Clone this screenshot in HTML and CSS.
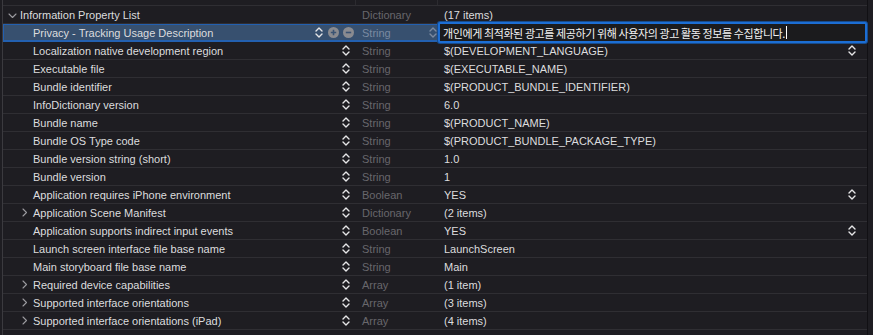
FILE: index.html
```html
<!DOCTYPE html>
<html>
<head>
<meta charset="utf-8">
<link rel="stylesheet" href="styles.css">
</head>
<body>
<svg width="0" height="0" class="defs">
  <defs>
    <symbol id="stepper" viewBox="0 0 8 11">
      <path d="M1 4 L4 1 L7 4 M1 7 L4 10 L7 7" fill="none" stroke="currentColor" stroke-width="1.4" stroke-linecap="round" stroke-linejoin="round"/>
    </symbol>
    <symbol id="chev-right" viewBox="0 0 6 9">
      <path d="M1 1 L4.5 4.5 L1 8" fill="none" stroke="currentColor" stroke-width="1.1" stroke-linecap="round" stroke-linejoin="round"/>
    </symbol>
    <symbol id="chev-down" viewBox="0 0 9 6">
      <path d="M1 1 L4.5 4.5 L8 1" fill="none" stroke="currentColor" stroke-width="1.1" stroke-linecap="round" stroke-linejoin="round"/>
    </symbol>
  </defs>
</svg>
<div class="table">
  <div class="strip">
    <span class="c-key"></span><span class="c-ctrl"></span><span class="c-type"></span><span class="c-val"></span>
  </div>

  <div class="row">
    <div class="key root"><svg class="disc down"><use href="#chev-down"/></svg>Information Property List</div>
    <div class="ctrl"></div>
    <div class="type">Dictionary</div>
    <div class="val">(17 items)</div>
  </div>

  <div class="row sel">
    <div class="key">Privacy - Tracking Usage Description</div>
    <div class="ctrl selctrl">
      <svg class="step"><use href="#stepper"/></svg>
      <svg class="pm" viewBox="0 0 11 11"><circle cx="5.5" cy="5.5" r="5.5" fill="#8a8b90"/><path d="M2.8 5.5 H8.2 M5.5 2.8 V8.2" stroke="#3a5373" stroke-width="1.6"/></svg>
      <svg class="pm" viewBox="0 0 11 11"><circle cx="5.5" cy="5.5" r="5.5" fill="#8a8b90"/><path d="M2.8 5.5 H8.2" stroke="#3a5373" stroke-width="1.6"/></svg>
    </div>
    <div class="type">String<svg class="step faint"><use href="#stepper"/></svg></div>
    <div class="val"><div class="field"><span class="ko">개인에게 최적화된 광고를 제공하기 위해 사용자의 광고 활동 정보를 수집합니다.</span><span class="caret"></span></div></div>
  </div>

  <div class="row">
    <div class="key">Localization native development region</div>
    <div class="ctrl"><svg class="step"><use href="#stepper"/></svg></div>
    <div class="type">String</div>
    <div class="val">$(DEVELOPMENT_LANGUAGE)<svg class="step vstep"><use href="#stepper"/></svg></div>
  </div>

  <div class="row">
    <div class="key">Executable file</div>
    <div class="ctrl"><svg class="step"><use href="#stepper"/></svg></div>
    <div class="type">String</div>
    <div class="val">$(EXECUTABLE_NAME)</div>
  </div>

  <div class="row">
    <div class="key">Bundle identifier</div>
    <div class="ctrl"><svg class="step"><use href="#stepper"/></svg></div>
    <div class="type">String</div>
    <div class="val">$(PRODUCT_BUNDLE_IDENTIFIER)</div>
  </div>

  <div class="row">
    <div class="key">InfoDictionary version</div>
    <div class="ctrl"><svg class="step"><use href="#stepper"/></svg></div>
    <div class="type">String</div>
    <div class="val">6.0</div>
  </div>

  <div class="row">
    <div class="key">Bundle name</div>
    <div class="ctrl"><svg class="step"><use href="#stepper"/></svg></div>
    <div class="type">String</div>
    <div class="val">$(PRODUCT_NAME)</div>
  </div>

  <div class="row">
    <div class="key">Bundle OS Type code</div>
    <div class="ctrl"><svg class="step"><use href="#stepper"/></svg></div>
    <div class="type">String</div>
    <div class="val">$(PRODUCT_BUNDLE_PACKAGE_TYPE)</div>
  </div>

  <div class="row">
    <div class="key">Bundle version string (short)</div>
    <div class="ctrl"><svg class="step"><use href="#stepper"/></svg></div>
    <div class="type">String</div>
    <div class="val">1.0</div>
  </div>

  <div class="row">
    <div class="key">Bundle version</div>
    <div class="ctrl"><svg class="step"><use href="#stepper"/></svg></div>
    <div class="type">String</div>
    <div class="val">1</div>
  </div>

  <div class="row">
    <div class="key">Application requires iPhone environment</div>
    <div class="ctrl"><svg class="step"><use href="#stepper"/></svg></div>
    <div class="type">Boolean</div>
    <div class="val">YES<svg class="step vstep"><use href="#stepper"/></svg></div>
  </div>

  <div class="row">
    <div class="key"><svg class="disc"><use href="#chev-right"/></svg>Application Scene Manifest</div>
    <div class="ctrl"><svg class="step"><use href="#stepper"/></svg></div>
    <div class="type">Dictionary</div>
    <div class="val">(2 items)</div>
  </div>

  <div class="row">
    <div class="key">Application supports indirect input events</div>
    <div class="ctrl"><svg class="step"><use href="#stepper"/></svg></div>
    <div class="type">Boolean</div>
    <div class="val">YES<svg class="step vstep"><use href="#stepper"/></svg></div>
  </div>

  <div class="row">
    <div class="key">Launch screen interface file base name</div>
    <div class="ctrl"><svg class="step"><use href="#stepper"/></svg></div>
    <div class="type">String</div>
    <div class="val">LaunchScreen</div>
  </div>

  <div class="row">
    <div class="key">Main storyboard file base name</div>
    <div class="ctrl"><svg class="step"><use href="#stepper"/></svg></div>
    <div class="type">String</div>
    <div class="val">Main</div>
  </div>

  <div class="row">
    <div class="key"><svg class="disc"><use href="#chev-right"/></svg>Required device capabilities</div>
    <div class="ctrl"><svg class="step"><use href="#stepper"/></svg></div>
    <div class="type">Array</div>
    <div class="val">(1 item)</div>
  </div>

  <div class="row">
    <div class="key"><svg class="disc"><use href="#chev-right"/></svg>Supported interface orientations</div>
    <div class="ctrl"><svg class="step"><use href="#stepper"/></svg></div>
    <div class="type">Array</div>
    <div class="val">(3 items)</div>
  </div>

  <div class="row">
    <div class="key"><svg class="disc"><use href="#chev-right"/></svg>Supported interface orientations (iPad)</div>
    <div class="ctrl"><svg class="step"><use href="#stepper"/></svg></div>
    <div class="type">Array</div>
    <div class="val">(4 items)</div>
  </div>
</div>
</body>
</html>
```

FILE: styles.css
```css
html, body {
  margin: 0;
  padding: 0;
  background: #1e1d22;
  height: 100%;
  overflow: hidden;
}

.defs {
  position: absolute;
}

.table {
  width: 866px;
  height: 335px;
  margin-left: 2px;
  border-left: 1px solid #3b3a3f;
  border-right: 1px solid #111014;
  box-sizing: border-box;
  font-family: "Liberation Sans", Arial, sans-serif;
  font-size: 11px;
  color: #dcdcde;
}

.strip {
  height: 5px;
  border-bottom: 1px solid #2f2e33;
  display: grid;
  grid-template-columns: 353px 0px 82px 1fr;
}

.strip .c-key {
  border-right: 1px solid #2c2b30;
}

.strip .c-type {
  border-right: 1px solid #2c2b30;
}

.row {
  height: 17px;
  border-bottom: 1px solid #2f2e33;
  display: grid;
  grid-template-columns: 305px 48px 82px 1fr;
  align-items: center;
  white-space: nowrap;
}

.key {
  padding-left: 30px;
  display: flex;
  align-items: center;
  position: relative;
}

.key.root {
  padding-left: 17px;
}

.disc {
  width: 6px;
  height: 9px;
  color: #9c9ba0;
  position: absolute;
  left: 19px;
  top: 50%;
  margin-top: -4.5px;
}

.disc.down {
  width: 9px;
  height: 6px;
  left: 5px;
  margin-top: -2px;
}

.ctrl {
  display: flex;
  justify-content: flex-end;
  align-items: center;
  padding-right: 6px;
  height: 17px;
}

.step {
  width: 8px;
  height: 11px;
  color: #e6e6e8;
  flex: none;
}

.step.faint {
  color: #7b8aa0;
  margin-left: auto;
  margin-right: 1px;
}

.selctrl {
  padding-right: 2px;
  gap: 4px;
}

.selctrl .step {
  margin-right: 1px;
}

.pm {
  width: 11px;
  height: 11px;
  flex: none;
}

.type {
  padding-left: 6px;
  color: #68676c;
  display: flex;
  align-items: center;
}

.val {
  padding-left: 6px;
  display: flex;
  align-items: center;
  padding-right: 11px;
}

.vstep {
  margin-left: auto;
}

.row.sel {
  background: #37506f;
  box-shadow: inset 0 0 0 1px #2360b0;
  border-bottom-color: #2360b0;
  position: relative;
}

.row.sel .type {
  color: #7a8aa1;
}

.row.sel .val {
  padding-left: 2px;
  padding-right: 0;
  align-self: stretch;
  position: relative;
}

.field {
  position: absolute;
  left: 0;
  right: 0;
  top: -2px;
  bottom: -2px;
  background: #1b1b1d;
  border: 2px solid #1c6ed4;
  border-radius: 2px;
  box-shadow: 0 0 0 1px #174b8c;
  display: flex;
  align-items: center;
  padding-left: 3px;
  box-sizing: border-box;
}

.ko {
  font-family: "Noto Sans CJK KR", "Liberation Sans", sans-serif;
  font-size: 11px;
  letter-spacing: -0.4px;
  color: #f2f2f2;
}

.caret {
  width: 1px;
  height: 13px;
  background: #ffffff;
  margin-left: 1px;
}
```
